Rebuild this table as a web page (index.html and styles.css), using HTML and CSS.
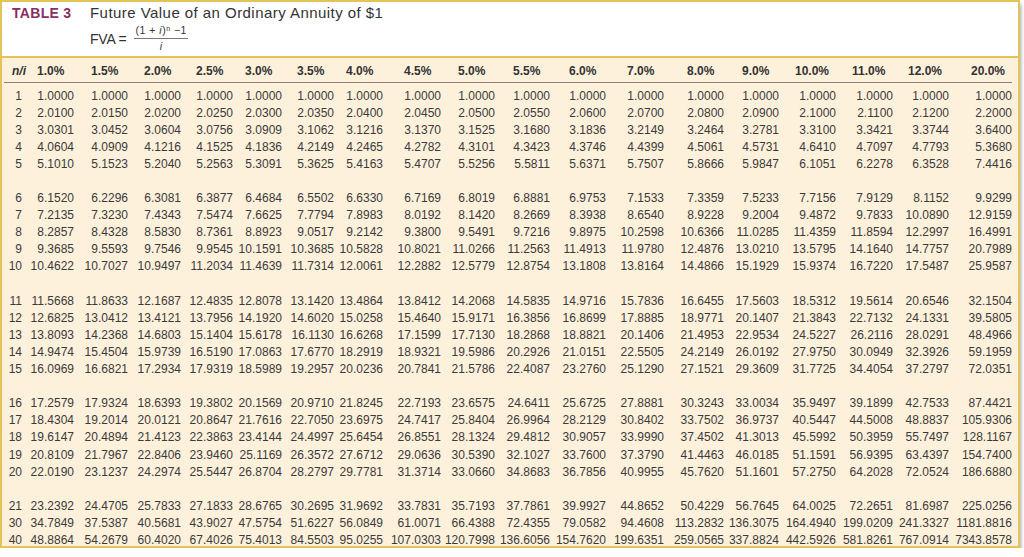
FILE: index.html
```html
<!DOCTYPE html>
<html lang="en">
<head>
<meta charset="utf-8">
<title>Table 3 - Future Value of an Ordinary Annuity of $1</title>
<link rel="stylesheet" href="styles.css">
</head>
<body>
<div class="frame">
  <header class="title">
    <div class="title-row"><span class="label">TABLE 3</span><span class="name">Future Value of an Ordinary Annuity of $1</span></div>
    <div class="formula">
      <span class="fva">FVA =</span>
      <span class="frac"><span class="num">(1 + <i>i</i>)<sup>n</sup> −1</span><span class="den"><i>i</i></span></span>
    </div>
  </header>
  <div class="body">
    <table class="fv">
      <colgroup>
        <col class="cn"><col class="w52"><col class="w54"><col class="w53"><col class="w52"><col class="w49"><col class="w52"><col class="w49"><col class="w58"><col class="w54"><col class="w55"><col class="w56"><col class="w58"><col class="w60"><col class="w55"><col class="w57"><col class="w57"><col class="w56"><col class="w63">
      </colgroup>
      <thead>
        <tr><th class="ni">n/i</th><th><span>1.0%</span></th><th><span>1.5%</span></th><th><span>2.0%</span></th><th><span>2.5%</span></th><th><span>3.0%</span></th><th><span>3.5%</span></th><th><span>4.0%</span></th><th><span>4.5%</span></th><th><span>5.0%</span></th><th><span>5.5%</span></th><th><span>6.0%</span></th><th><span>7.0%</span></th><th><span>8.0%</span></th><th><span>9.0%</span></th><th class="wide"><span>10.0%</span></th><th class="wide"><span>11.0%</span></th><th class="wide"><span>12.0%</span></th><th class="wide"><span>20.0%</span></th></tr>
      </thead>
      <tbody>
        <tr class="pad"><td colspan="19"></td></tr>
        <tr><td>1</td><td>1.0000</td><td>1.0000</td><td>1.0000</td><td>1.0000</td><td>1.0000</td><td>1.0000</td><td>1.0000</td><td>1.0000</td><td>1.0000</td><td>1.0000</td><td>1.0000</td><td>1.0000</td><td>1.0000</td><td>1.0000</td><td>1.0000</td><td>1.0000</td><td>1.0000</td><td>1.0000</td></tr>
        <tr><td>2</td><td>2.0100</td><td>2.0150</td><td>2.0200</td><td>2.0250</td><td>2.0300</td><td>2.0350</td><td>2.0400</td><td>2.0450</td><td>2.0500</td><td>2.0550</td><td>2.0600</td><td>2.0700</td><td>2.0800</td><td>2.0900</td><td>2.1000</td><td>2.1100</td><td>2.1200</td><td>2.2000</td></tr>
        <tr><td>3</td><td>3.0301</td><td>3.0452</td><td>3.0604</td><td>3.0756</td><td>3.0909</td><td>3.1062</td><td>3.1216</td><td>3.1370</td><td>3.1525</td><td>3.1680</td><td>3.1836</td><td>3.2149</td><td>3.2464</td><td>3.2781</td><td>3.3100</td><td>3.3421</td><td>3.3744</td><td>3.6400</td></tr>
        <tr><td>4</td><td>4.0604</td><td>4.0909</td><td>4.1216</td><td>4.1525</td><td>4.1836</td><td>4.2149</td><td>4.2465</td><td>4.2782</td><td>4.3101</td><td>4.3423</td><td>4.3746</td><td>4.4399</td><td>4.5061</td><td>4.5731</td><td>4.6410</td><td>4.7097</td><td>4.7793</td><td>5.3680</td></tr>
        <tr><td>5</td><td>5.1010</td><td>5.1523</td><td>5.2040</td><td>5.2563</td><td>5.3091</td><td>5.3625</td><td>5.4163</td><td>5.4707</td><td>5.5256</td><td>5.5811</td><td>5.6371</td><td>5.7507</td><td>5.8666</td><td>5.9847</td><td>6.1051</td><td>6.2278</td><td>6.3528</td><td>7.4416</td></tr>
        <tr class="gap"><td colspan="19"></td></tr>
        <tr><td>6</td><td>6.1520</td><td>6.2296</td><td>6.3081</td><td>6.3877</td><td>6.4684</td><td>6.5502</td><td>6.6330</td><td>6.7169</td><td>6.8019</td><td>6.8881</td><td>6.9753</td><td>7.1533</td><td>7.3359</td><td>7.5233</td><td>7.7156</td><td>7.9129</td><td>8.1152</td><td>9.9299</td></tr>
        <tr><td>7</td><td>7.2135</td><td>7.3230</td><td>7.4343</td><td>7.5474</td><td>7.6625</td><td>7.7794</td><td>7.8983</td><td>8.0192</td><td>8.1420</td><td>8.2669</td><td>8.3938</td><td>8.6540</td><td>8.9228</td><td>9.2004</td><td>9.4872</td><td>9.7833</td><td>10.0890</td><td>12.9159</td></tr>
        <tr><td>8</td><td>8.2857</td><td>8.4328</td><td>8.5830</td><td>8.7361</td><td>8.8923</td><td>9.0517</td><td>9.2142</td><td>9.3800</td><td>9.5491</td><td>9.7216</td><td>9.8975</td><td>10.2598</td><td>10.6366</td><td>11.0285</td><td>11.4359</td><td>11.8594</td><td>12.2997</td><td>16.4991</td></tr>
        <tr><td>9</td><td>9.3685</td><td>9.5593</td><td>9.7546</td><td>9.9545</td><td>10.1591</td><td>10.3685</td><td>10.5828</td><td>10.8021</td><td>11.0266</td><td>11.2563</td><td>11.4913</td><td>11.9780</td><td>12.4876</td><td>13.0210</td><td>13.5795</td><td>14.1640</td><td>14.7757</td><td>20.7989</td></tr>
        <tr><td>10</td><td>10.4622</td><td>10.7027</td><td>10.9497</td><td>11.2034</td><td>11.4639</td><td>11.7314</td><td>12.0061</td><td>12.2882</td><td>12.5779</td><td>12.8754</td><td>13.1808</td><td>13.8164</td><td>14.4866</td><td>15.1929</td><td>15.9374</td><td>16.7220</td><td>17.5487</td><td>25.9587</td></tr>
        <tr class="gap"><td colspan="19"></td></tr>
        <tr><td>11</td><td>11.5668</td><td>11.8633</td><td>12.1687</td><td>12.4835</td><td>12.8078</td><td>13.1420</td><td>13.4864</td><td>13.8412</td><td>14.2068</td><td>14.5835</td><td>14.9716</td><td>15.7836</td><td>16.6455</td><td>17.5603</td><td>18.5312</td><td>19.5614</td><td>20.6546</td><td>32.1504</td></tr>
        <tr><td>12</td><td>12.6825</td><td>13.0412</td><td>13.4121</td><td>13.7956</td><td>14.1920</td><td>14.6020</td><td>15.0258</td><td>15.4640</td><td>15.9171</td><td>16.3856</td><td>16.8699</td><td>17.8885</td><td>18.9771</td><td>20.1407</td><td>21.3843</td><td>22.7132</td><td>24.1331</td><td>39.5805</td></tr>
        <tr><td>13</td><td>13.8093</td><td>14.2368</td><td>14.6803</td><td>15.1404</td><td>15.6178</td><td>16.1130</td><td>16.6268</td><td>17.1599</td><td>17.7130</td><td>18.2868</td><td>18.8821</td><td>20.1406</td><td>21.4953</td><td>22.9534</td><td>24.5227</td><td>26.2116</td><td>28.0291</td><td>48.4966</td></tr>
        <tr><td>14</td><td>14.9474</td><td>15.4504</td><td>15.9739</td><td>16.5190</td><td>17.0863</td><td>17.6770</td><td>18.2919</td><td>18.9321</td><td>19.5986</td><td>20.2926</td><td>21.0151</td><td>22.5505</td><td>24.2149</td><td>26.0192</td><td>27.9750</td><td>30.0949</td><td>32.3926</td><td>59.1959</td></tr>
        <tr><td>15</td><td>16.0969</td><td>16.6821</td><td>17.2934</td><td>17.9319</td><td>18.5989</td><td>19.2957</td><td>20.0236</td><td>20.7841</td><td>21.5786</td><td>22.4087</td><td>23.2760</td><td>25.1290</td><td>27.1521</td><td>29.3609</td><td>31.7725</td><td>34.4054</td><td>37.2797</td><td>72.0351</td></tr>
        <tr class="gap"><td colspan="19"></td></tr>
        <tr><td>16</td><td>17.2579</td><td>17.9324</td><td>18.6393</td><td>19.3802</td><td>20.1569</td><td>20.9710</td><td>21.8245</td><td>22.7193</td><td>23.6575</td><td>24.6411</td><td>25.6725</td><td>27.8881</td><td>30.3243</td><td>33.0034</td><td>35.9497</td><td>39.1899</td><td>42.7533</td><td>87.4421</td></tr>
        <tr><td>17</td><td>18.4304</td><td>19.2014</td><td>20.0121</td><td>20.8647</td><td>21.7616</td><td>22.7050</td><td>23.6975</td><td>24.7417</td><td>25.8404</td><td>26.9964</td><td>28.2129</td><td>30.8402</td><td>33.7502</td><td>36.9737</td><td>40.5447</td><td>44.5008</td><td>48.8837</td><td>105.9306</td></tr>
        <tr><td>18</td><td>19.6147</td><td>20.4894</td><td>21.4123</td><td>22.3863</td><td>23.4144</td><td>24.4997</td><td>25.6454</td><td>26.8551</td><td>28.1324</td><td>29.4812</td><td>30.9057</td><td>33.9990</td><td>37.4502</td><td>41.3013</td><td>45.5992</td><td>50.3959</td><td>55.7497</td><td>128.1167</td></tr>
        <tr><td>19</td><td>20.8109</td><td>21.7967</td><td>22.8406</td><td>23.9460</td><td>25.1169</td><td>26.3572</td><td>27.6712</td><td>29.0636</td><td>30.5390</td><td>32.1027</td><td>33.7600</td><td>37.3790</td><td>41.4463</td><td>46.0185</td><td>51.1591</td><td>56.9395</td><td>63.4397</td><td>154.7400</td></tr>
        <tr><td>20</td><td>22.0190</td><td>23.1237</td><td>24.2974</td><td>25.5447</td><td>26.8704</td><td>28.2797</td><td>29.7781</td><td>31.3714</td><td>33.0660</td><td>34.8683</td><td>36.7856</td><td>40.9955</td><td>45.7620</td><td>51.1601</td><td>57.2750</td><td>64.2028</td><td>72.0524</td><td>186.6880</td></tr>
        <tr class="gap"><td colspan="19"></td></tr>
        <tr><td>21</td><td>23.2392</td><td>24.4705</td><td>25.7833</td><td>27.1833</td><td>28.6765</td><td>30.2695</td><td>31.9692</td><td>33.7831</td><td>35.7193</td><td>37.7861</td><td>39.9927</td><td>44.8652</td><td>50.4229</td><td>56.7645</td><td>64.0025</td><td>72.2651</td><td>81.6987</td><td>225.0256</td></tr>
        <tr><td>30</td><td>34.7849</td><td>37.5387</td><td>40.5681</td><td>43.9027</td><td>47.5754</td><td>51.6227</td><td>56.0849</td><td>61.0071</td><td>66.4388</td><td>72.4355</td><td>79.0582</td><td>94.4608</td><td>113.2832</td><td>136.3075</td><td>164.4940</td><td>199.0209</td><td>241.3327</td><td>1181.8816</td></tr>
        <tr><td>40</td><td>48.8864</td><td>54.2679</td><td>60.4020</td><td>67.4026</td><td>75.4013</td><td>84.5503</td><td>95.0255</td><td>107.0303</td><td>120.7998</td><td>136.6056</td><td>154.7620</td><td>199.6351</td><td>259.0565</td><td>337.8824</td><td>442.5926</td><td>581.8261</td><td>767.0914</td><td>7343.8578</td></tr>
      </tbody>
    </table>
  </div>
</div>
</body>
</html>
```

FILE: styles.css
```css
html, body {
  margin: 0;
  padding: 0;
  background: #ffffff;
}

body {
  font-family: "Liberation Sans", Arial, sans-serif;
  color: #3a3a3a;
}

.frame {
  width: 1016px;
  height: 544px;
  border: 2px solid #e6c35a;
  background: #fef1dc;
  box-shadow: 1px 4px 4px rgba(0, 0, 0, 0.35);
  display: flex;
  flex-direction: column;
  overflow: hidden;
}

.title {
  background: #ffffff;
  height: 56px;
  flex: none;
  box-sizing: border-box;
  border-bottom: 2px solid #e6c35a;
  padding: 3px 0 0 10px;
  display: flex;
  flex-direction: column;
}

.title-row {
  display: flex;
  align-items: baseline;
  line-height: 16px;
}

.label {
  width: 78px;
  font-size: 14px;
  font-weight: bold;
  color: #8a2e62;
  letter-spacing: 0.3px;
}

.name {
  font-size: 15px;
  letter-spacing: 0.45px;
  color: #333333;
}

.formula {
  display: flex;
  align-items: center;
  padding-left: 78px;
  margin-top: 3px;
  color: #333333;
}

.fva {
  font-size: 14px;
  letter-spacing: -0.2px;
}

.frac {
  display: inline-flex;
  flex-direction: column;
  align-items: center;
  margin-left: 8px;
  font-size: 10.5px;
  line-height: 13px;
  letter-spacing: 0.5px;
}

.num {
  border-bottom: 1px solid #777777;
  padding: 0 1px 1px;
}

.num sup {
  font-size: 7px;
  vertical-align: 3px;
  line-height: 0;
}

.den {
  padding-top: 1px;
}

.body {
  flex: 1;
  padding: 2px 0 0 2px;
}

.fv {
  border-collapse: collapse;
  table-layout: fixed;
  width: 1008px;
  font-size: 12px;
}

.cn { width: 18px; }
.w49 { width: 49px; }
.w52 { width: 52px; }
.w53 { width: 53px; }
.w54 { width: 54px; }
.w55 { width: 55px; }
.w56 { width: 56px; }
.w57 { width: 57px; }
.w58 { width: 58px; }
.w60 { width: 60px; }
.w63 { width: 63px; }

.fv th {
  height: 22px;
  padding: 0;
  font-weight: bold;
  text-align: right;
  color: #333333;
  border-bottom: 1.5px solid #8a8378;
  white-space: nowrap;
}

.fv th span {
  display: inline-block;
  width: 37px;
  text-align: left;
}

.fv th.wide span {
  margin-right: 4px;
}

.fv th.ni {
  font-style: italic;
  text-align: left;
  padding-left: 8px;
}

.fv td {
  height: 17.1px;
  padding: 0;
  text-align: right;
  white-space: nowrap;
  line-height: 14px;
}

.fv tr.pad td {
  height: 4px;
}
```
